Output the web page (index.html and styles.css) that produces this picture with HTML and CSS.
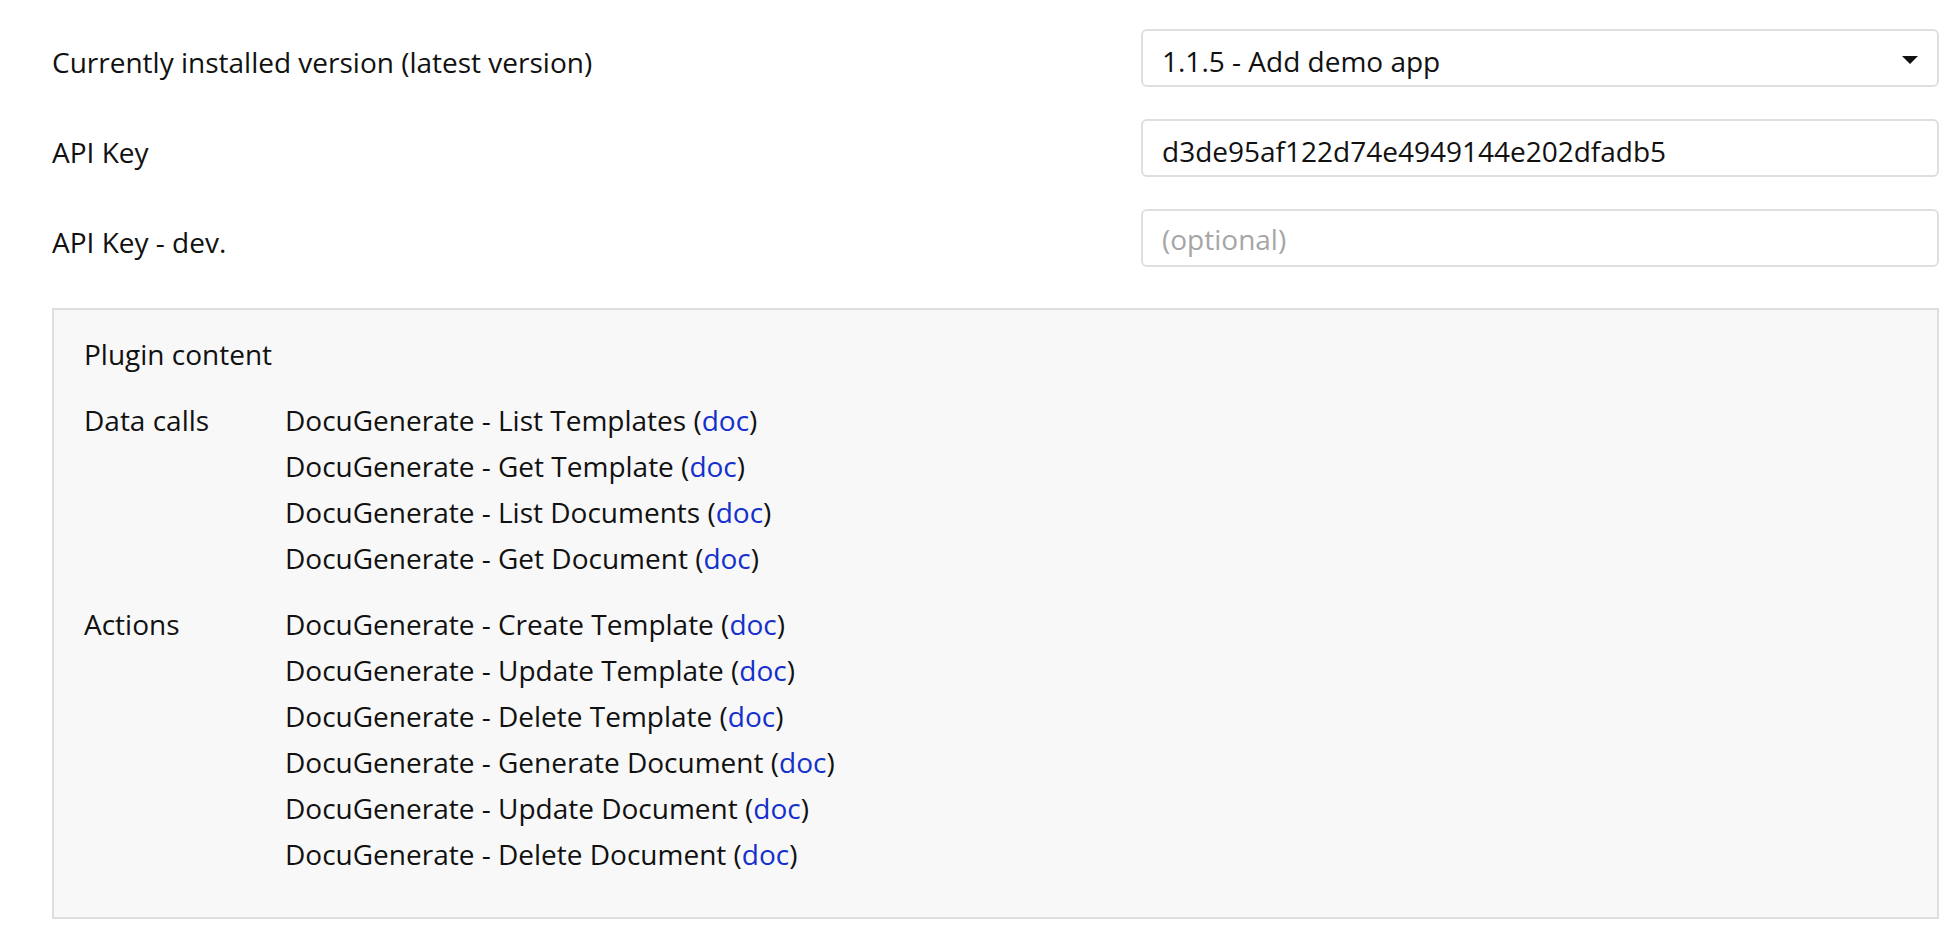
FILE: index.html
```html
<!DOCTYPE html>
<html lang="en">
<head>
<meta charset="utf-8">
<title>Plugin settings</title>
<link rel="stylesheet" href="styles.css">
</head>
<body>
<div class="page">
  <div class="row">
    <div class="label">Currently installed version (latest version)</div>
    <div class="field select">
      <span class="select-text">1.1.5 - Add demo app</span>
      <svg class="caret" width="16" height="8" viewBox="0 0 16 8"><path d="M0 0 H16 L8 8 Z" fill="#111"/></svg>
    </div>
  </div>
  <div class="row">
    <div class="label">API Key</div>
    <input class="field" type="text" value="d3de95af122d74e4949144e202dfadb5">
  </div>
  <div class="row">
    <div class="label">API Key - dev.</div>
    <input class="field field-empty" type="text" placeholder="(optional)">
  </div>

  <div class="panel">
    <div class="panel-title">Plugin content</div>
    <div class="group">
      <div class="group-label">Data calls</div>
      <ul class="items">
        <li>DocuGenerate - List Templates (<a href="#">doc</a>)</li>
        <li>DocuGenerate - Get Template (<a href="#">doc</a>)</li>
        <li>DocuGenerate - List Documents (<a href="#">doc</a>)</li>
        <li>DocuGenerate - Get Document (<a href="#">doc</a>)</li>
      </ul>
    </div>
    <div class="group">
      <div class="group-label">Actions</div>
      <ul class="items">
        <li>DocuGenerate - Create Template (<a href="#">doc</a>)</li>
        <li>DocuGenerate - Update Template (<a href="#">doc</a>)</li>
        <li>DocuGenerate - Delete Template (<a href="#">doc</a>)</li>
        <li>DocuGenerate - Generate Document (<a href="#">doc</a>)</li>
        <li>DocuGenerate - Update Document (<a href="#">doc</a>)</li>
        <li>DocuGenerate - Delete Document (<a href="#">doc</a>)</li>
      </ul>
    </div>
  </div>
</div>
</body>
</html>
```

FILE: styles.css
```css
* { box-sizing: border-box; }

html, body {
  margin: 0;
  padding: 0;
  background: #ffffff;
}

body {
  font-family: "Open Sans", "Liberation Sans", sans-serif;
  font-size: 28px;
  color: #111111;
}

.page {
  padding: 29px 21px 0 52px;
  display: flex;
  flex-direction: column;
  gap: 32px;
}

.row {
  display: flex;
  align-items: flex-start;
  height: 58px;
}

.label {
  flex: 1;
  line-height: 38px;
  margin-top: 14px;
}

.field {
  width: 798px;
  height: 58px;
  border: 2px solid #dfdfdf;
  border-radius: 6px;
  background: #ffffff;
  padding: 6px 20px 0 19px;
  font-family: "Open Sans", "Liberation Sans", sans-serif;
  font-size: 28px;
  color: #111111;
  outline: none;
  margin: 0;
}

.field-empty {
  padding-top: 2px;
}

.field::placeholder {
  color: #a6a6a6;
}

.select {
  display: flex;
  align-items: center;
  justify-content: space-between;
  padding-right: 19px;
}

.select-text {
  line-height: 38px;
}

.caret {
  display: block;
  margin-top: -2px;
}

.panel {
  margin-top: 9px;
  background: #f8f8f8;
  border: 2px solid #dedede;
  padding: 21px 28px 40px 30px;
  height: 611px;
}

.panel-title {
  line-height: 46px;
  margin-bottom: 20px;
}

.group {
  display: flex;
  align-items: flex-start;
}

.group + .group {
  margin-top: 20px;
}

.group-label {
  width: 201px;
  line-height: 46px;
}

.items {
  list-style: none;
  margin: 0;
  padding: 0;
}

.items li {
  line-height: 46px;
}

.items a {
  color: #1530cc;
  text-decoration: none;
}
```
